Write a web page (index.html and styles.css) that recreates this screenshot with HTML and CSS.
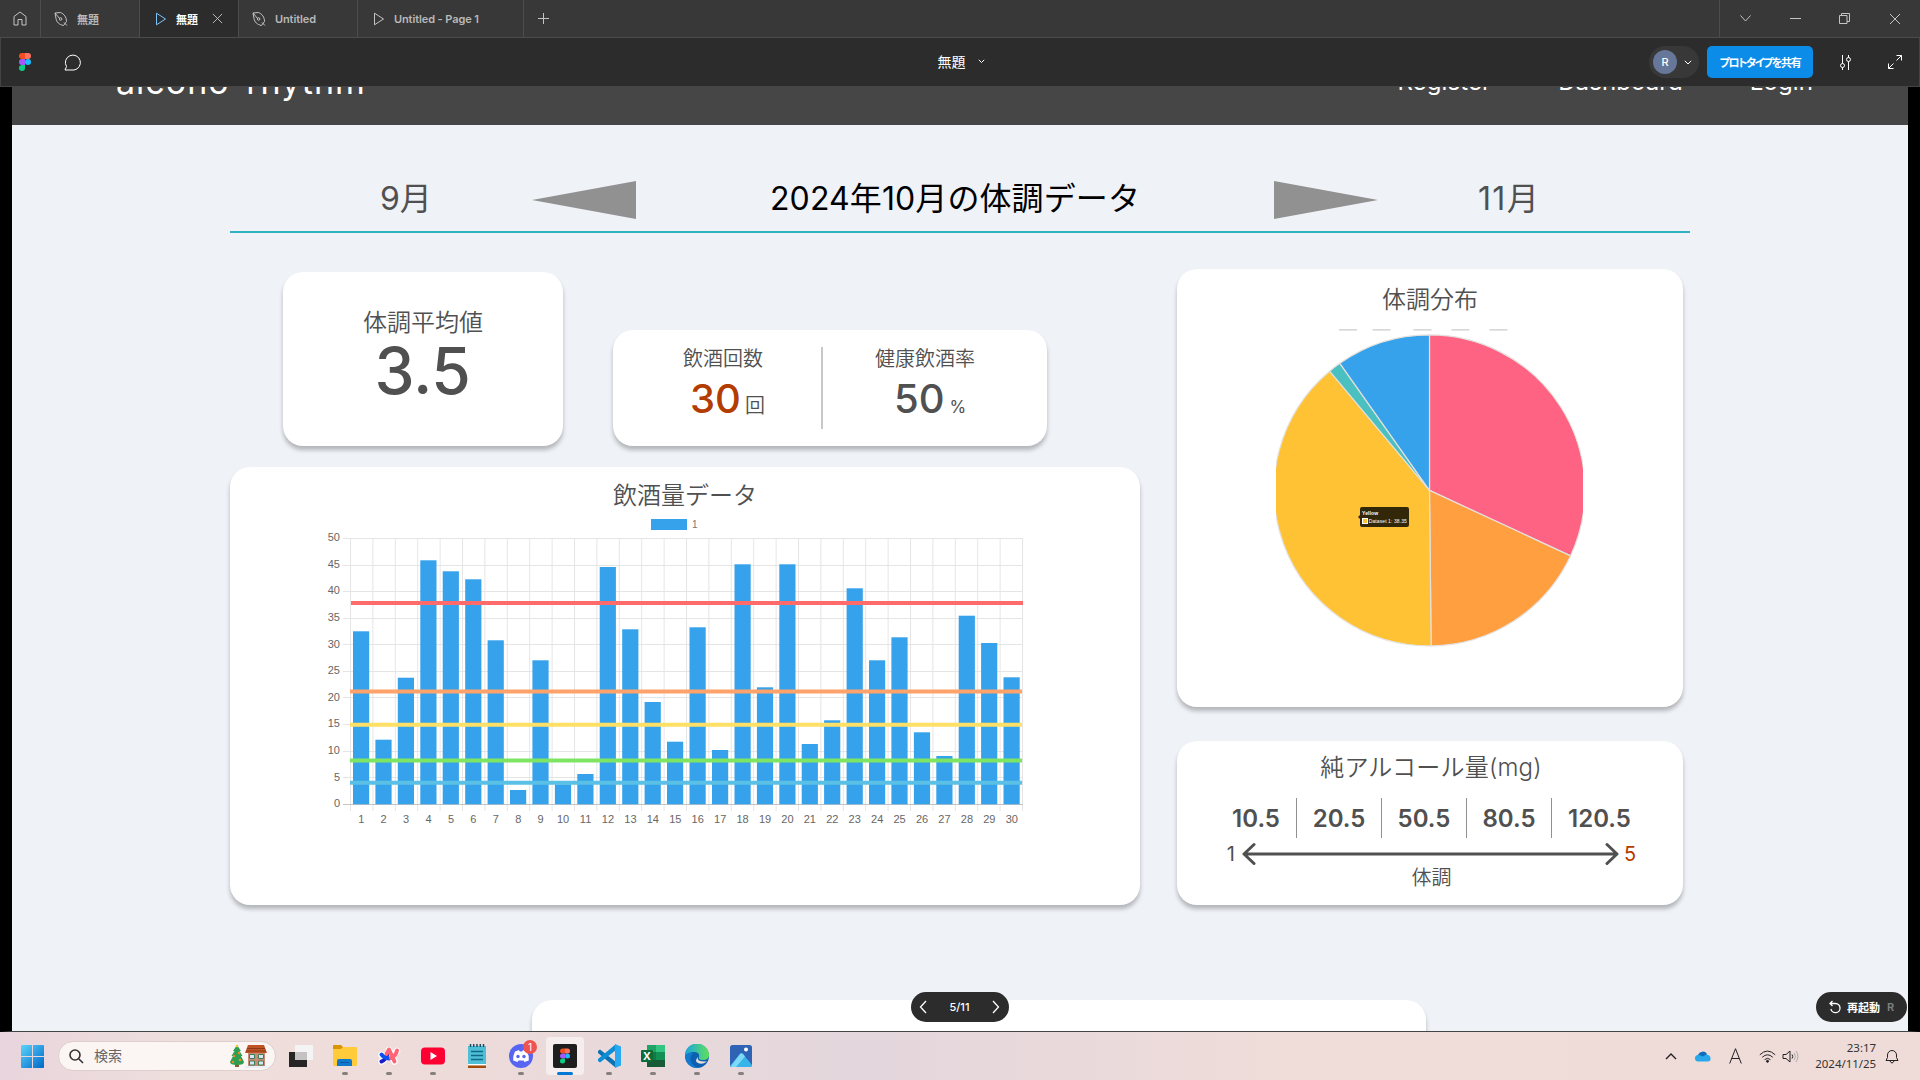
FILE: index.html
```html
<!DOCTYPE html>
<html lang="ja">
<head>
<meta charset="utf-8">
<title>無題</title>
<link rel="stylesheet" href="styles.css">
</head>
<body>
<svg class="defs" width="0" height="0">
  <symbol id="pen" viewBox="0 0 14 16"><path d="M1 2l5.500-.5C10 3 12.500 6 12.500 10.500L9.500 14.500C5 13.500 2.500 11 2 7.500zM1 2l5 6M10 11.500l3 3"/><circle cx="6.600" cy="8" r="1.300"/></symbol>
  <symbol id="play" viewBox="0 0 12 14"><path d="M1.500 1.200l9 5.800-9 5.800z"/></symbol>
  <symbol id="cross" viewBox="0 0 12 12"><path d="M1 1l10 10M11 1L1 11"/></symbol>
  <symbol id="figma" viewBox="0 0 12 18"><path fill="#f24e1e" d="M3 0h3v6H3a3 3 0 010-6z"/><path fill="#ff7262" d="M6 0h3a3 3 0 010 6H6z"/><path fill="#a259ff" d="M3 6h3v6H3a3 3 0 010-6z"/><circle fill="#1abcfe" cx="9" cy="9" r="3"/><path fill="#0acf83" d="M3 12h3v3a3 3 0 11-3-3z"/></symbol>
</svg>

<div class="tabs">
  <div class="tab tab-home"><svg class="ico" width="14" height="15" viewBox="0 0 14 15"><path d="M1 5.500L7 1l6 4.500V14H9V8.500H5V14H1z"/></svg></div>
  <div class="tab w99"><svg class="ico" width="14" height="16"><use href="#pen"/></svg><span>無題</span></div>
  <div class="tab w99 active"><svg class="ico blue" width="12" height="14"><use href="#play"/></svg><span>無題</span><svg class="ico tab-close" width="11" height="11"><use href="#cross"/></svg></div>
  <div class="tab w119"><svg class="ico" width="14" height="16"><use href="#pen"/></svg><span>Untitled</span></div>
  <div class="tab w166"><svg class="ico" width="12" height="14"><use href="#play"/></svg><span>Untitled - Page 1</span></div>
  <div class="tab-add"><svg class="ico" width="11" height="11" viewBox="0 0 11 11"><path d="M5.500 0v11M0 5.500h11"/></svg></div>
  <div class="win-controls">
    <svg class="ico" width="11" height="7" viewBox="0 0 11 7"><path d="M.5.500l5 5.500 5-5.500"/></svg>
    <svg class="ico" width="11" height="11" viewBox="0 0 11 11"><path d="M0 5.500h11"/></svg>
    <svg class="ico" width="11" height="11" viewBox="0 0 11 11"><path d="M.5 2.500h7.500v8H.5zM2.500 2.500v-2h8v8H8"/></svg>
    <svg class="ico" width="12" height="12"><use href="#cross"/></svg>
  </div>
</div>

<div class="toolbar">
  <div class="tb-left">
    <svg width="12" height="18"><use href="#figma"/></svg>
    <svg class="ico light" width="19" height="17" viewBox="0 0 19 17"><path d="M1 16l1.500-3.500A7.500 7.500 0 1110 16z" /></svg>
  </div>
  <div class="tb-title"><span>無題</span><svg class="ico light" width="7" height="5" viewBox="0 0 7 5"><path d="M.8.800l2.700 2.700L6.200.800"/></svg></div>
  <div class="tb-right">
    <div class="user"><span class="avatar">R</span><svg class="ico light" width="8" height="5" viewBox="0 0 8 5"><path d="M.8.800L4 4 7.200.800"/></svg></div>
    <div class="share">プロトタイプを共有</div>
    <svg class="ico light sliders" width="13" height="15" viewBox="0 0 13 15"><path d="M3.500 0v8.500M3.500 12.500V15M9.500 0v2.500M9.500 6.500V15"/><circle cx="3.500" cy="10.500" r="2"/><circle cx="9.500" cy="4.500" r="2"/></svg>
    <svg class="ico light expand" width="14" height="14" viewBox="0 0 14 14"><path d="M8.500.5h5v5M13.500.5L8.500 5.500M5.500 13.500h-5v-5M.5 13.500l5-5"/></svg>
  </div>
</div>

<div class="stage">
  <header class="site-head">
    <span class="logo">alcoho-rhythm</span>
    <nav class="site-nav"><span>Register</span><span>Dashboard</span><span>Login</span></nav>
  </header>

  <main class="page">
    <div class="months">
      <span class="m-prev">9月</span>
      <svg width="104" height="38" viewBox="0 0 104 38"><path fill="#919191" d="M0 19L104 0v38z"/></svg>
      <h1>2024年10月の体調データ</h1>
      <svg width="104" height="38" viewBox="0 0 104 38"><path fill="#919191" d="M104 19L0 0v38z"/></svg>
      <span class="m-next">11月</span>
    </div>

    <div class="cols">
      <div class="col-left">
        <div class="stats">
          <section class="card avg"><h2>体調平均値</h2><strong>3.5</strong></section>
          <section class="card drink">
            <div class="half half-a"><h3>飲酒回数</h3><p class="num red"><b>30</b><i>回</i></p></div>
            <div class="half half-b"><h3>健康飲酒率</h3><p class="num"><b>50</b><i>%</i></p></div>
          </section>
        </div>

        <section class="card chart">
          <h2>飲酒量データ</h2>
          <div class="legend"><span class="swatch"></span>1</div>
          <div class="plot">
            <div class="y-axis"><span>50</span><span>45</span><span>40</span><span>35</span><span>30</span><span>25</span><span>20</span><span>15</span><span>10</span><span>5</span><span>0</span></div>
            <svg width="680" height="274" viewBox="0 0 680 274">
              <defs>
                <pattern id="vgrid" x="7" y="0" width="22.400" height="274" patternUnits="userSpaceOnUse"><rect width="1" height="274" fill="#e5e5e5"/></pattern>
              </defs>
              <rect x="7" y="0" width="673" height="273" fill="url(#vgrid)"/>
              <path stroke="#e5e5e5" d="M0 .5h680M0 27.500h680M0 53.500h680M0 80.500h680M0 106.500h680M0 133.500h680M0 159.500h680M0 186.500h680M0 213.500h680M0 239.500h680"/>
              <path stroke="#c4c4c4" d="M0 266.500h680"/>
              <g class="bars">
                <rect x="10" y="93.300" width="16.200" height="173"/><rect x="32.400" y="201.700" width="16.200" height="64.600"/><rect x="54.800" y="139.700" width="16.200" height="126.600"/><rect x="77.300" y="22.300" width="16.200" height="244"/><rect x="99.700" y="33.300" width="16.200" height="233"/><rect x="122.200" y="41.300" width="16.200" height="225"/><rect x="144.600" y="102.300" width="16.200" height="164"/><rect x="167" y="252" width="16.200" height="14.300"/><rect x="189.400" y="122.300" width="16.200" height="144"/><rect x="211.900" y="246.300" width="16.200" height="20"/>
                <rect x="234.300" y="236" width="16.200" height="30.300"/><rect x="256.700" y="29" width="16.200" height="237.300"/><rect x="279.200" y="91.300" width="16.200" height="175"/><rect x="301.600" y="164" width="16.200" height="102.300"/><rect x="324" y="203.700" width="16.200" height="62.600"/><rect x="346.500" y="89.300" width="16.200" height="177"/><rect x="369" y="212" width="16.200" height="54.300"/><rect x="391.500" y="26.300" width="16.200" height="240"/><rect x="413.900" y="149.300" width="16.200" height="117"/><rect x="436.300" y="26.300" width="16.200" height="240"/>
                <rect x="458.700" y="206" width="16.200" height="60.300"/><rect x="481.100" y="182.300" width="16.200" height="84"/><rect x="503.600" y="50.300" width="16.200" height="216"/><rect x="526" y="122.300" width="16.200" height="144"/><rect x="548.400" y="99.300" width="16.200" height="167"/><rect x="570.900" y="194.300" width="16.200" height="72"/><rect x="593.300" y="218" width="16.200" height="48.300"/><rect x="615.700" y="77.700" width="16.200" height="188.600"/><rect x="638.100" y="105" width="16.200" height="161.300"/><rect x="660.500" y="139.300" width="16.200" height="127"/>
              </g>
              <g class="limits">
                <path stroke="#ff6b6b" d="M8 65h672"/><path stroke="#ffa36b" d="M7 153.400h672"/><path stroke="#ffe066" d="M7 186.700h672"/><path stroke="#7ee562" d="M7 222.400h672"/><path stroke="#5bc0e5" d="M7 244.700h672"/>
              </g>
            </svg>
          </div>
          <div class="x-axis"><span>1</span><span>2</span><span>3</span><span>4</span><span>5</span><span>6</span><span>7</span><span>8</span><span>9</span><span>10</span><span>11</span><span>12</span><span>13</span><span>14</span><span>15</span><span>16</span><span>17</span><span>18</span><span>19</span><span>20</span><span>21</span><span>22</span><span>23</span><span>24</span><span>25</span><span>26</span><span>27</span><span>28</span><span>29</span><span>30</span></div>
        </section>
      </div>

      <div class="col-right">
        <section class="card pie">
          <h2>体調分布</h2>
          <div class="pie-wrap">
            <svg width="307" height="318" viewBox="-153.500 -161.400 307 318">
              <path stroke="#ccc" stroke-width="1.200" d="M-90.500-160.500h18M-57-160.500h18M-16-160.500h18M22-160.500h18M60-160.500h18"/>
              <g stroke="#e4e0dc" stroke-width="1.200" stroke-linejoin="round">
                <path fill="#ff6384" d="M0 0V-155.500A155.500 155.500 0 01141.050 65.470z"/>
                <path fill="#ff9f40" d="M0 0L141.050 65.470A155.500 155.500 0 011.630 155.490z"/>
                <path fill="#ffc234" d="M0 0L1.630 155.490A155.500 155.500 0 01-99.850-119.200z"/>
                <path fill="#4bc0c0" d="M0 0L-99.850-119.200A155.500 155.500 0 01-89.630-127.070z"/>
                <path fill="#36a2eb" d="M0 0L-89.630-127.070A155.500 155.500 0 010-155.500z"/>
              </g>
            </svg>
            <div class="tip"><b>Yellow</b><span><i></i>Dataset 1: 38.35</span></div>
          </div>
        </section>

        <section class="card alcohol">
          <h2>純アルコール量(mg)</h2>
          <div class="levels"><span>10.5</span><span>20.5</span><span>50.5</span><span>80.5</span><span>120.5</span></div>
          <div class="scale"><span>1</span><svg width="377" height="24" viewBox="0 0 377 24"><path fill="none" stroke="#505050" stroke-width="3" stroke-linecap="round" stroke-linejoin="round" d="M2 12h373M12 2.500L2 12l10 9.500M365 2.500L375 12l-10 9.500"/></svg><span class="red">5</span></div>
          <p>体調</p>
        </section>
      </div>
    </div>
    <section class="card next"></section>
  </main>

  <div class="pager">
    <svg class="ico light" width="8" height="14" viewBox="0 0 8 14"><path d="M7 1L1.500 7 7 13"/></svg><span>5/11</span><svg class="ico light" width="8" height="14" viewBox="0 0 8 14"><path d="M1 1l5.500 6L1 13"/></svg>
  </div>
  <div class="restart"><svg class="ico light" width="12" height="14" viewBox="0 0 12 14"><path d="M3.500 1L1 3.500 3.500 6M1 3.500h5.500a4.600 4.600 0 11-4.600 5.500"/></svg><span>再起動</span><em>R</em></div>
</div>

<footer class="taskbar">
  <div class="start"><svg width="23" height="23" viewBox="0 0 23 23"><defs><linearGradient id="win" x2="1" y2="1"><stop stop-color="#5ad4fb"/><stop offset="1" stop-color="#0067c8"/></linearGradient></defs><path fill="url(#win)" d="M0 1q0-1 1-1h10v11H0zM12 0h10q1 0 1 1v10H12zM0 12h11v11H1q-1 0-1-1zM12 12h11v10q0 1-1 1H12z"/></svg></div>
  <div class="search">
    <svg class="lens" width="15" height="15" viewBox="0 0 15 15"><circle cx="6" cy="6" r="5"/><path d="M9.700 9.700L14 14"/></svg><span>検索</span>
    <svg class="xmas" width="37" height="24" viewBox="0 0 37 24">
      <path fill="#8a5a33" d="M5 20h4v3H5z"/><path fill="#2f9e52" d="M7 1l4 6H9.500l3 5H11l3 6q0 3-7 3t-7-3l3-6H1.500l3-5H3z"/><circle cx="7" cy="2" r="1.300" fill="#f6c544"/><g fill="#f08a24"><circle cx="4" cy="12" r="1.200"/><circle cx="9" cy="9" r="1.200"/><circle cx="10" cy="16" r="1.300"/><circle cx="3" cy="18" r="1.200"/></g>
      <path fill="#c98b76" d="M18 9h17v14H18z"/><path fill="#bd5527" d="M18 1h16l3 8H15z"/><path stroke="#8f3a18" d="M17 4.500h18M16 7h20"/><path fill="#d5e6f3" stroke="#3c7d57" d="M19.500 10.500h5v4h-5zM28.500 10.500h5v4h-5zM19.500 17h5v4h-5zM28.500 17h5v4h-5z"/><path fill="#e8f1f8" d="M15 22h22v2H15z"/>
    </svg>
  </div>
  <div class="apps">
    <div class="app"><svg width="24" height="24" viewBox="0 0 24 24"><path fill="#262626" d="M0 8h18v15H0z"/><path fill="#f4f4f4" d="M6 1h18v15H6z"/><path fill="#c4c2c2" d="M6 8h12v8H6z"/></svg></div>
    <div class="app run"><svg width="24" height="24" viewBox="0 0 24 24"><path fill="#d99400" d="M0 2q0-1 1-1h7l2 2v4H0z"/><path fill="#ffcb3a" d="M0 5h8l2-2h13q1 0 1 1v17q0 1-1 1H1q-1 0-1-1z"/><path fill="#1278cc" d="M4 22v-5q0-2 2-2h11q2 0 2 2v5z"/><path stroke="#0b5aa5" d="M7 18.500h9"/></svg></div>
    <div class="app run"><svg width="24" height="24" viewBox="0 0 24 24" fill="none" stroke-linecap="round" stroke-linejoin="round"><path stroke="#fff" stroke-width="6.500" d="M4.500 17.500q4-1 7.500-11.500l5.500 11.500M4.500 11q8 7 15.500-4"/><path stroke="#1b19c9" stroke-width="4" d="M4.500 17.500q4-1 6.500-9"/><path stroke="#0b51f0" stroke-width="4" d="M4.500 10.500q3 4 8 4"/><path stroke="#ff6575" stroke-width="4" d="M9.500 10L12 5.500l5.500 12M14 14q5-2 6-7.500"/></svg></div>
    <div class="app run"><svg width="24" height="24" viewBox="0 0 24 24"><rect y="3.500" width="24" height="17" rx="4" fill="#ff0033"/><path fill="#fff" d="M9.500 8v8l6.500-4z"/></svg></div>
    <div class="app"><svg width="24" height="24" viewBox="0 0 24 24"><path fill="#4fbfd8" d="M3 2h18v18H3z"/><path stroke="#1a4d66" stroke-width="1.500" d="M5.500 0v3M8.700 0v3M12 0v3M15.300 0v3M18.500 0v3"/><path stroke="#126983" stroke-width="1.500" d="M6 7.500h12M6 11.500h12M6 15.500h12"/><path fill="#fff" d="M3 20h18v1.500H3z"/><path fill="#a34d0c" d="M3 21.500h18V24H3z"/></svg></div>
    <div class="app run"><svg width="24" height="24" viewBox="0 0 24 24"><circle cx="12" cy="12" r="12" fill="#5865f2"/><path fill="#fff" d="M6 7.500l4-1.500.7 1.500h2.600L14 6l4 1.500q2.500 4.500 1.800 9L15.500 18l-1-1.500h-5l-1 1.500-4.300-1.500Q3.500 12 6 7.500z"/><g fill="#5865f2"><circle cx="9" cy="12.500" r="1.700"/><circle cx="15" cy="12.500" r="1.700"/></g></svg><span class="badge">1</span></div>
    <div class="app on"><svg width="24" height="24" viewBox="0 0 24 24"><rect width="24" height="24" rx="2" fill="#1e1e1e"/><use href="#figma" x="7" y="4" width="10" height="16"/></svg></div>
    <div class="app run"><svg width="24" height="24" viewBox="0 0 24 24"><path fill="#0873b5" d="M1 7l2-1.500L19 18v6L1 9z"/><path fill="#0b8ed6" d="M1 17l2 1.500L19 6V0L1 15z"/><path fill="#29a9f2" d="M18 0l6 2.500v19L18 24z"/></svg></div>
    <div class="app run"><svg width="24" height="24" viewBox="0 0 24 24"><path fill="#21a366" d="M6 1h9v7H6z"/><path fill="#33c481" d="M15 1h9v7h-9z"/><path fill="#107c41" d="M6 8h18v8H6z"/><path fill="#185c37" d="M6 16h18v7H6z"/><path fill="#149152" d="M15 8h9v8h-9z"/><rect y="6" width="12" height="12" rx="1" fill="#0d6b38"/><text x="6" y="16" text-anchor="middle" font-family="Open Sans, sans-serif" font-weight="700" font-size="11" fill="#fff">X</text></svg></div>
    <div class="app run"><svg width="24" height="24" viewBox="0 0 24 24"><defs><linearGradient id="edge"><stop stop-color="#1ba5e0"/><stop offset="1" stop-color="#5fe05a"/></linearGradient></defs><circle cx="12" cy="12" r="12" fill="#0d5fb0"/><path fill="url(#edge)" d="M0 12A12 12 0 0124 11q0 5-6 5-5 0-4-3 1-5-5-5-6 0-9 4z"/><path fill="#127bd0" d="M0 12q3-4 8-3-4 4-2 9t9 5.500Q2 25 0 12z"/><path fill="#ecdcdc" d="M13 13q-2 5 9 4.500Q17 21 13 19t0-6z"/></svg></div>
    <div class="app run"><svg width="24" height="24" viewBox="0 0 24 24"><rect x="1" y="1" width="22" height="22" rx="2.500" fill="#2e63b5"/><path fill="#37b5ea" d="M1 22L11 10q1.500-1.500 3 0l9 11q0 2-2 2H3q-2 0-2-1z"/><path fill="#7ed9f7" d="M2 22L11 10q1.500-1.500 3 0l2 2.500L7 23H3z"/><circle cx="17" cy="5.500" r="2" fill="#fff"/></svg></div>
  </div>
  <div class="tray">
    <svg class="up" width="12" height="7" viewBox="0 0 12 7"><path d="M1 6l5-5 5 5"/></svg>
    <svg class="cloud" width="17" height="12" viewBox="0 0 17 12"><path fill="#0f6cbd" d="M4 5a5 5 0 019-1l-3 5-8 .5z"/><path fill="#28a8ea" d="M3.500 11.500a3.300 3.300 0 01.5-6.500q2-.5 5 1.500l3-2q4 0 4.500 3.500t-3 3.500z"/></svg>
    <svg class="ime" width="13" height="16" viewBox="0 0 13 16"><path d="M.7 15.500L6.500.7l5.800 14.800M2.700 10.500h7.600"/></svg>
    <svg class="wifi" width="17" height="13" viewBox="0 0 17 13"><path d="M.8 4.800q7.700-7.500 15.400 0M3.200 7.300q5.300-5 10.600 0M5.600 9.600q2.900-2.600 5.800 0"/><circle cx="8.500" cy="11.300" r="1"/></svg>
    <svg class="vol" width="17" height="13" viewBox="0 0 17 13"><path d="M1 4.500h3L8 1v11L4 8.500H1zM10 4.500q1.500 2 0 4"/><path stroke="#aaa" d="M12 3q3 3.500 0 7M14 1q4 5.500 0 11"/></svg>
    <div class="clock"><span>23:17</span><span>2024/11/25</span></div>
    <svg class="bell" width="14" height="15" viewBox="0 0 14 15"><path d="M1 11.500l1.500-3V6a4.500 4.500 0 019 0v2.500l1.500 3zM5 12q2 4 4 0"/></svg>
  </div>
</footer>
</body>
</html>
```
FILE: styles.css
```css
* { box-sizing: border-box; }
body {
  margin: 0;
  width: 1920px;
  height: 1080px;
  overflow: hidden;
  display: flex;
  flex-direction: column;
  font-family: Inter, "Noto Sans CJK JP", sans-serif;
  color: #505050;
}
h1, h2, h3, p { margin: 0; font-weight: 350; }
i, em { font-style: normal; }
svg { flex: none; display: block; }
.defs { position: absolute; }
.ico { fill: none; stroke: #c4c4c4; stroke-width: 1; overflow: visible; }
.light { stroke: #fff; }
.blue { stroke: #7cc4f8; }
.red { color: #b33c00; }

/* Window tabs */
.tabs { height: 38px; flex: none; display: flex; background: #383838; border-bottom: 1px solid #4c4c4c; }
.tab {
  display: flex; align-items: center; gap: 9px; padding-left: 13px;
  border-right: 1px solid #4c4c4c;
  font-size: 11px; font-weight: 600; letter-spacing: -.1px; color: #b8b8b8;
}
.tab-home { width: 41px; }
.w99 { width: 99px; }
.w119 { width: 119px; }
.w166 { width: 166px; padding-left: 15px; }
.active { background: #2c2c2c; color: #fff; padding-left: 15px; }
.tab-close { margin-left: 5px; }
.tab-add { display: flex; align-items: center; padding-left: 14px; }
.win-controls {
  margin-left: auto; width: 201px; padding: 0 19px 0 20px; display: flex; align-items: center;
  justify-content: space-between; border-left: 1px solid #4c4c4c;
}

/* Prototype toolbar */
.toolbar {
  height: 49px; flex: none; display: grid; grid-template-columns: 1fr auto 1fr; align-items: center;
  background: #2c2c2c; border: solid #444; border-width: 0 1px 1px;
}
.tb-left { display: flex; align-items: center; gap: 33px; padding-left: 18px; }
.tb-title { display: flex; align-items: center; gap: 12px; font-size: 14px; line-height: 20px; color: #fff; padding: 0 0 1px 2px; }
.tb-right { display: flex; align-items: center; justify-content: flex-end; padding-right: 17px; }
.user { width: 50px; height: 32px; border-radius: 16px; background: #383838; display: flex; align-items: center; gap: 7px; padding-left: 4px; }
.avatar { width: 24px; height: 24px; border-radius: 50%; background: #667799; color: #fff; font-size: 11px; font-weight: 500; display: grid; place-items: center; }
.share {
  width: 106px; height: 32px; margin-left: 8px; border-radius: 5px; background: #0c8ce9; color: #fff;
  display: grid; place-items: center; font-size: 11px; font-weight: 600; letter-spacing: -1.4px;
  font-feature-settings: "palt"; white-space: nowrap;
}
.sliders { margin-left: 26px; }
.expand { margin-left: 36px; }

/* Prototype canvas */
.stage {
  position: relative; height: 945px; flex: none; overflow: hidden;
  background: #eff2f7; border: solid #000; border-width: 0 12px;
  border-bottom: 1px solid #444;
}
.site-head {
  height: 38px; overflow: hidden; background: #464646; color: #fff;
  display: flex; align-items: flex-start; justify-content: space-between; padding: 0 95px 0 104px;
}
.logo { margin-top: -27px; font-size: 34px; line-height: 44px; letter-spacing: 1px; }
.site-nav { display: flex; gap: 67px; margin-top: -20px; font-size: 24px; line-height: 30px; letter-spacing: .1px; }
.page { padding: 38px 0 0 218px; }
.months {
  width: 1460px; height: 70px; border-bottom: 2px solid #2fb3c3;
  display: grid; grid-template-columns: 302px 104px 638px 104px 262px; align-items: center;
  font-size: 32px; padding-bottom: 2px;
}
.months svg { margin-top: 8px; }
.months h1 { font-size: 32px; color: #000; text-align: center; font-weight: 400; white-space: nowrap; letter-spacing: .1px; }
.m-prev { padding-left: 150px; }
.m-next { padding-left: 100px; letter-spacing: 1.300px; }
.cols { display: flex; gap: 37px; padding-top: 36px; }
.card { background: #fff; border-radius: 20px; box-shadow: 0 4px 4px rgba(0, 0, 0, .25); }
.card h2 { font-size: 24px; line-height: 29px; text-align: center; }
.stats { display: flex; align-items: flex-end; gap: 50px; padding: 3px 0 0 53px; }
.avg { width: 280px; height: 174px; padding-top: 36px; text-align: center; }
.avg strong { display: block; font-size: 64px; line-height: 67px; font-weight: 500; letter-spacing: -.3px; padding-right: 1px; }
.drink { width: 434px; height: 116px; display: flex; padding-top: 17px; }
.half { height: 82px; }
.half-a { width: 210px; padding-left: 70px; border-right: 2px solid #c8c8c8; }
.half-b { padding-left: 52px; }
.drink h3 { font-size: 20px; line-height: 25px; }
.num { display: flex; align-items: baseline; }
.half-a .num { padding-left: 7px; }
.half-b .num { padding-left: 19px; }
.num b { font-size: 40px; line-height: 54px; font-weight: 500; }
.num i { font-size: 20px; color: #505050; margin-left: 4px; }
.half-b i { font-size: 17px; margin-left: 5px; font-weight: 400; }

/* Bar chart */
.chart { width: 910px; height: 438px; margin-top: 21px; padding-top: 14px; }
.legend { height: 11px; margin: 9px 0 0 421px; display: flex; align-items: center; gap: 5px; font: 10px "Liberation Sans", sans-serif; color: #777; }
.swatch { width: 36px; height: 11px; background: #36a2eb; }
.plot { display: flex; margin: 8px 0 0 90px; gap: 3px; height: 273px; }
.y-axis { width: 20px; margin-top: -7px; text-align: right; font: 11px/13px "Liberation Sans", sans-serif; color: #666; display: flex; flex-direction: column; }
.y-axis span { flex: none; height: 26.630px; }
.bars { fill: #36a2eb; }
.limits { stroke-width: 4; }
.x-axis { width: 673px; margin: 2px 0 0 120px; display: grid; grid-template-columns: repeat(30, 1fr); text-align: center; font: 11px/13px "Liberation Sans", sans-serif; color: #666; }

/* Right column */
.pie { width: 506px; height: 438px; padding-top: 16px; }
.pie-wrap { position: relative; width: 307px; margin: 15px 0 0 99px; }
.tip { position: absolute; left: 84px; top: 178px; width: 49px; height: 20px; border-radius: 2px; background: #33270a; color: #fff; font: 5px/8px "Liberation Sans", sans-serif; padding: 2px; white-space: nowrap; }
.tip::before { content: ""; position: absolute; left: -2px; top: 8px; border: solid transparent; border-width: 2px 2px 2px 0; border-right-color: #33270a; }
.tip b, .tip span { display: flex; align-items: center; letter-spacing: .1px; }
.tip i { width: 6px; height: 6px; background: #ffc234; border: 1px solid #fff; margin-right: 1px; }
.alcohol { width: 506px; height: 164px; margin-top: 34px; padding-top: 12px; }
.alcohol h2 { letter-spacing: .2px; padding-left: 2px; }
.levels { display: flex; height: 40px; margin: 16px 0 0 35px; font-size: 24px; font-weight: 600; line-height: 41px; text-align: center; }
.levels span { width: 85px; border-right: 1px solid #919191; }
.levels span:first-child { padding-left: 4px; }
.levels span:last-child { width: 95px; border: 0; }
.scale { display: flex; align-items: center; justify-content: center; gap: 7px; margin: 4px 0 0 3px; height: 24px; font-size: 20px; line-height: 24px; }
.scale span:last-child { margin-left: -2px; }
.alcohol p { font-size: 20px; line-height: 22px; text-align: center; margin: 1px 0 0 3px; }
.next { width: 894px; height: 100px; margin: 95px 0 0 302px; }

/* Floating controls over the canvas */
.pager, .restart { position: absolute; top: 905px; height: 30px; border-radius: 15px; background: #2c2c2c; color: #fff; display: flex; align-items: center; font-size: 11px; font-weight: 500; }
.pager { left: 899px; width: 98px; justify-content: space-between; padding: 0 9px 0 8px; }
.pager .ico, .restart .ico { stroke-width: 1.300; }
.restart { right: 1px; width: 91px; padding-left: 13px; gap: 6px; font-weight: 600; }
.restart em { margin-left: 1px; color: #808080; }

/* Taskbar */
.taskbar { height: 48px; flex: none; display: flex; align-items: center; background: linear-gradient(90deg, #e8d5dd 0, #efdfdc 10%, #eddbda 25%, #e3d6dc 45%, #f0ddd9 68%, #efdbd8 85%, #efdcd9 100%); color: #333; }
.start { padding-left: 21px; width: 58px; }
.search { width: 218px; height: 30px; border-radius: 15px; background: #fbf5f4; border: 1px solid #dccfce; display: flex; align-items: center; padding: 0 8px 0 10px; font-size: 14px; color: #666; }
.search span { margin: -2px 0 0 10px; }
.lens { fill: none; stroke: #333; stroke-width: 1.600; }
.xmas { margin-left: auto; }
.apps { display: flex; padding-left: 3px; }
.app { position: relative; width: 44px; height: 48px; display: grid; place-items: center; }
.app.run::after, .app.on::after { content: ""; position: absolute; left: 19px; bottom: 5px; width: 6px; height: 3px; border-radius: 2px; background: #85807f; }
.app.on::before { content: ""; position: absolute; left: 3px; top: 5px; width: 38px; height: 38px; border-radius: 4px; background: #f6eeee; }
.app.on::after { left: 14px; width: 16px; background: #0078d4; }
.app svg { position: relative; }
.badge { position: absolute; left: 24px; top: 8px; width: 14px; height: 14px; border-radius: 50%; background: #f0524f; color: #fff; font-size: 10px; line-height: 14px; text-align: center; }
.tray { margin-left: auto; display: flex; align-items: center; padding-right: 21px; fill: none; stroke: #222; }
.up { stroke-width: 1.400; }
.cloud { margin-left: 17px; stroke: none; }
.ime { margin-left: 18px; }
.wifi { margin-left: 17px; }
.wifi circle { fill: #222; }
.vol { margin-left: 6px; }
.clock { width: 66px; margin-left: 11px; text-align: right; font: 11.500px/16px "Noto Sans", sans-serif; display: flex; flex-direction: column; color: #333; letter-spacing: -.05px; }
.bell { margin-left: 9px; }
```
